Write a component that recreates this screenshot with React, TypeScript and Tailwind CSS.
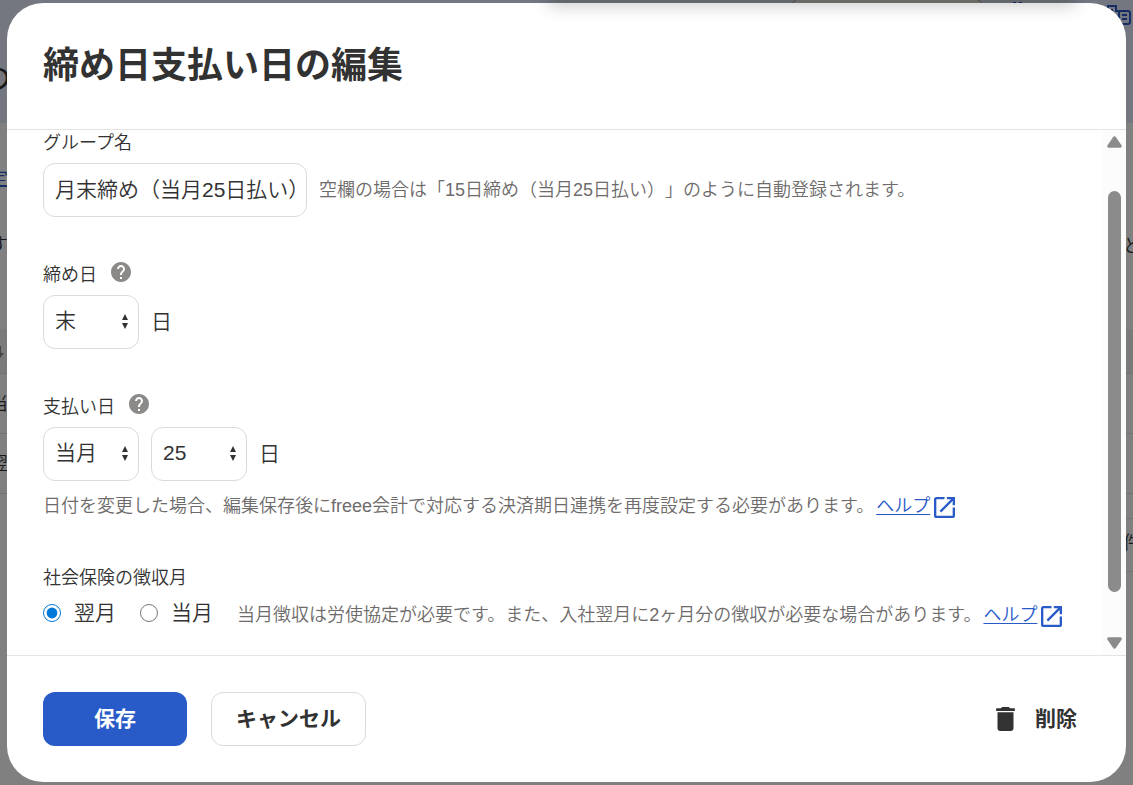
import type { ReactNode } from "react";

function HelpIcon() {
  return (
    <button type="button" aria-label="ヘルプを表示" className="block">
      <svg viewBox="2 2 20 20" className="size-5 fill-[#8c8989]">
        <path d="M12 2C6.48 2 2 6.48 2 12s4.48 10 10 10 10-4.48 10-10S17.52 2 12 2zm1 17h-2v-2h2v2zm2.07-7.75-.9.92C13.45 12.9 13 13.5 13 15h-2v-.5c0-1.1.45-2.1 1.17-2.83l1.24-1.26c.37-.36.59-.86.59-1.41 0-1.1-.9-2-2-2s-2 .9-2 2H8c0-2.21 1.79-4 4-4s4 1.79 4 4c0 .88-.36 1.68-.93 2.25z" />
      </svg>
    </button>
  );
}

function HelpLink() {
  return (
    <a href="#help" className="ml-0.5 inline-flex items-center gap-1 text-[#285ac8]">
      <span className="underline underline-offset-2">ヘルプ</span>
      <svg viewBox="3 3 18 18" className="mt-0.5 size-[21px] fill-current" aria-hidden="true">
        <path d="M19 19H5V5h7V3H5c-1.11 0-2 .9-2 2v14c0 1.1.89 2 2 2h14c1.1 0 2-.9 2-2v-7h-2v7zM14 3v2h3.59l-9.83 9.83 1.41 1.41L19 6.41V10h2V3h-7z" />
      </svg>
    </a>
  );
}

function SelectBox({ id, label, options, value }: { id: string; label: string; options: string[]; value: string }) {
  return (
    <div className="relative w-24">
      <select
        id={id}
        aria-label={label}
        defaultValue={value}
        className="h-[54px] w-full appearance-none rounded-xl border border-[#dcd9d9] bg-white pl-[11px] pb-0.5 text-[21px]"
      >
        {options.map((o) => (
          <option key={o}>{o}</option>
        ))}
      </select>
      <svg viewBox="0 0 6 15" className="pointer-events-none absolute right-[11px] top-[19px] h-[15px] w-1.5 fill-[#323232]" aria-hidden="true">
        <path d="M3 0L6 6H0zM3 15L0 9h6z" />
      </svg>
    </div>
  );
}

function Hint({ children }: { children: ReactNode }) {
  return <p className="text-lg leading-[27px] text-[#6e6b6b]">{children}</p>;
}

function Backdrop() {
  return (
    <div aria-hidden="true" className="absolute inset-0 overflow-hidden bg-[#808080] text-lg leading-none text-[#191919]">
      <div className="h-[123px] bg-[#747780]" />
      <div className="absolute inset-x-0 top-[329px] h-[45px] border-b border-[#737171] bg-[#7b7a7a]" />
      <div className="absolute inset-x-0 top-[433px] h-[61px] border-y border-[#737171]" />
      <div className="absolute right-0 top-[518px] h-[54px] w-8 border-y border-[#737171]" />
      <span className="absolute -left-6 top-[62px] text-4xl leading-none">つ</span>
      <span className="absolute -left-2.5 top-[170px] text-[#142d64] underline">定</span>
      <span className="absolute -left-2.5 top-[236px]">す</span>
      <span className="absolute -left-2.5 top-[395px]">当</span>
      <span className="absolute -left-2.5 top-[455px]">翌</span>
      <svg viewBox="0 0 8 12" className="absolute left-0 top-[346px] h-3 w-2 -translate-x-1 fill-[#464545]">
        <path d="M3 0h2v7h3l-4 5-4-5h3z" />
      </svg>
      <span className="absolute left-[1123px] top-[237px]">と</span>
      <span className="absolute left-[1123px] top-[534px]">件</span>
      <svg viewBox="0 0 24 21" className="absolute left-[1107px] top-[5px] h-[21px] w-6 fill-none stroke-[#142d64] stroke-2">
        <path d="M1 20V1h8v5h12q2 0 2 2v9q0 2-2 2H1M12 6v13M15 10h5M15 14h5M4 5h2M4 10h4M4 15h4" />
      </svg>
      <div className="absolute -top-1 left-[787px] h-10 w-[200px] rounded-full border border-[#5a5858] bg-[#7b7b78]" />
      <svg viewBox="0 0 10 3" className="absolute left-[1013px] top-0 h-[3px] w-2.5 fill-[#142d64]">
        <path d="M0 3V2h3v1zM6 3V2h3v1z" />
      </svg>
    </div>
  );
}

export default function App() {
  return (
    <div className="relative flex min-h-screen overflow-hidden px-[7px] py-[3px] font-['Liberation_Sans','Noto_Sans_CJK_JP_DemiLight','Noto_Sans_CJK_JP_Light','Noto_Sans_CJK_JP',sans-serif] text-[#323232] [text-spacing-trim:space-all]">
      <Backdrop />
      <div role="dialog" aria-labelledby="dialog-title" className="relative flex flex-1 flex-col overflow-hidden rounded-[36px] bg-white">
        <header className="border-b border-[#e6e3e3] px-9 py-9">
          <h1 id="dialog-title" className="font-['Liberation_Sans','Noto_Sans_CJK_JP',sans-serif] text-4xl font-bold leading-[54px]">
            締め日支払い日の編集
          </h1>
        </header>

        <div className="flex flex-1">
          <form id="closing-form" className="flex-1 pl-9">
            <label htmlFor="group-name" className="block pb-1.5 text-lg leading-[27px]">
              グループ名
            </label>
            <div className="flex items-center gap-3">
              <input
                id="group-name"
                type="text"
                defaultValue="月末締め（当月25日払い）"
                className="h-[54px] w-[264px] rounded-xl border border-[#dcd9d9] px-[11px] pb-1 text-[21px]"
              />
              <Hint>空欄の場合は「15日締め（当月25日払い）」のように自動登録されます。</Hint>
            </div>

            <div className="mt-[45px] flex items-start gap-3.5 pb-1.5">
              <label htmlFor="closing-day" className="text-lg leading-[27px]">
                締め日
              </label>
              <HelpIcon />
            </div>
            <div className="flex items-center gap-3">
              <SelectBox id="closing-day" label="締め日" options={["末", "15", "20", "25"]} value="末" />
              <span className="text-[21px] leading-8">日</span>
            </div>

            <div className="mt-[45px] flex items-start gap-3.5 pb-1.5">
              <label htmlFor="pay-month" className="text-lg leading-[27px]">
                支払い日
              </label>
              <HelpIcon />
            </div>
            <div className="flex items-center gap-3">
              <SelectBox id="pay-month" label="支払い月" options={["当月", "翌月"]} value="当月" />
              <SelectBox id="pay-day" label="支払い日" options={["末", "15", "20", "25"]} value="25" />
              <span className="text-[21px] leading-8">日</span>
            </div>
            <div className="mt-3">
              <Hint>
                日付を変更した場合、編集保存後にfreee会計で対応する決済期日連携を再度設定する必要があります。
                <HelpLink />
              </Hint>
            </div>

            <fieldset className="mt-[45px]">
              <legend className="text-lg leading-[27px]">社会保険の徴収月</legend>
              <div className="mt-1 flex items-center gap-6">
                <label className="flex items-center gap-[13px] text-[21px] leading-8">
                  <input type="radio" name="collect" defaultChecked className="size-[18px] accent-[#0078d7]" />
                  翌月
                </label>
                <label className="flex items-center gap-[13px] text-[21px] leading-8">
                  <input type="radio" name="collect" className="size-[18px] accent-[#0078d7]" />
                  当月
                </label>
                <div className="pt-1.5">
                  <Hint>
                    当月徴収は労使協定が必要です。また、入社翌月に2ヶ月分の徴収が必要な場合があります。
                    <HelpLink />
                  </Hint>
                </div>
              </div>
            </fieldset>
          </form>

          <div aria-hidden="true" className="flex w-[23px] flex-col items-center bg-[#fcfcfc] py-1.5">
            <svg viewBox="0 0 15 12" className="h-3 w-[15px] fill-[#8b8b8b]">
              <path d="M6 1.2q1.5-2 3 0l5.5 8q1 2-1 2.5h-12q-2-.5-1-2.5z" />
            </svg>
            <div className="mt-[43px] h-[401px] w-[13px] rounded-full bg-[#8b8b8b]" />
            <svg viewBox="0 0 15 12" className="mt-auto h-3 w-[15px] rotate-180 fill-[#8b8b8b]">
              <path d="M6 1.2q1.5-2 3 0l5.5 8q1 2-1 2.5h-12q-2-.5-1-2.5z" />
            </svg>
          </div>
        </div>

        <footer className="flex items-center gap-6 border-t border-[#e6e3e3] p-9 font-['Liberation_Sans','Noto_Sans_CJK_JP',sans-serif] text-[21px] font-bold">
          <button type="submit" form="closing-form" className="h-[54px] w-36 rounded-xl bg-[#285ac8] text-white">
            保存
          </button>
          <button type="button" className="h-[54px] rounded-xl border border-[#dcd9d9] px-6">
            キャンセル
          </button>
          <button type="button" className="ml-auto flex h-[54px] items-center gap-5 px-[13px]">
            <svg viewBox="5 3 14 18" className="h-6 w-[19px] fill-current" aria-hidden="true">
              <path d="M6 19c0 1.1.9 2 2 2h8c1.1 0 2-.9 2-2V7H6v12zM19 4h-3.5l-1-1h-5l-1 1H5v2h14V4z" />
            </svg>
            削除
          </button>
        </footer>
      </div>
      <div aria-hidden="true" className="pointer-events-none absolute left-[548px] -top-10 h-10 w-[528px] shadow-[0_6px_18px_rgba(0,0,0,0.2)]" />
    </div>
  );
}
